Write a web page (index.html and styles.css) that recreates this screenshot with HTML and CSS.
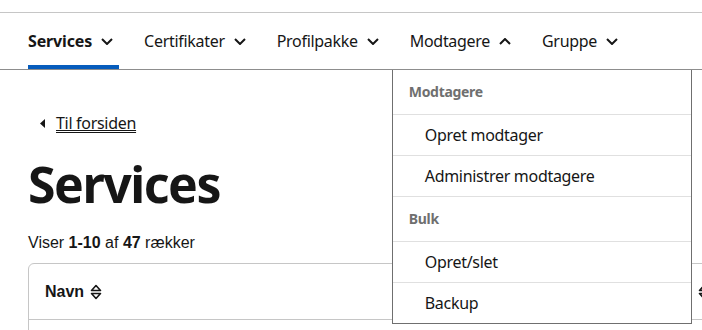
FILE: index.html
```html
<!DOCTYPE html>
<html lang="da">
<head>
    <meta charset="UTF-8">
    <meta name="viewport" content="width=device-width, initial-scale=1.0">
    <title>Services</title>
    <link rel="stylesheet" href="styles.css">
</head>
<body>
    <header class="topbar">
        <nav class="mainnav">
            <ul class="nav-list">
                <li class="nav-item active">
                    <span class="nav-label">Services</span>
                    <svg class="chev" width="12" height="7" viewBox="0 0 12 7"><path d="M1 1 L6 6 L11 1" fill="none" stroke="#161616" stroke-width="2"/></svg>
                </li>
                <li class="nav-item">
                    <span class="nav-label">Certifikater</span>
                    <svg class="chev" width="12" height="7" viewBox="0 0 12 7"><path d="M1 1 L6 6 L11 1" fill="none" stroke="#161616" stroke-width="2"/></svg>
                </li>
                <li class="nav-item">
                    <span class="nav-label">Profilpakke</span>
                    <svg class="chev" width="12" height="7" viewBox="0 0 12 7"><path d="M1 1 L6 6 L11 1" fill="none" stroke="#161616" stroke-width="2"/></svg>
                </li>
                <li class="nav-item open">
                    <span class="nav-label">Modtagere</span>
                    <svg class="chev" width="12" height="7" viewBox="0 0 12 7"><path d="M1 6 L6 1 L11 6" fill="none" stroke="#161616" stroke-width="2"/></svg>
                    <!-- dropdown menu -->
                    <div class="dropdown">
                        <div class="dd-head">Modtagere</div>
                        <a class="dd-link" href="#">Opret modtager</a>
                        <a class="dd-link" href="#">Administrer modtagere</a>
                        <div class="dd-head">Bulk</div>
                        <a class="dd-link" href="#">Opret/slet</a>
                        <a class="dd-link last" href="#">Backup</a>
                    </div>
                </li>
                <li class="nav-item">
                    <span class="nav-label">Gruppe</span>
                    <svg class="chev" width="12" height="7" viewBox="0 0 12 7"><path d="M1 1 L6 6 L11 1" fill="none" stroke="#161616" stroke-width="2"/></svg>
                </li>
            </ul>
        </nav>
    </header>

    <main class="content">
        <a class="back-link" href="#">
            <svg width="5" height="9" viewBox="0 0 5 9"><path d="M5 0 L0 4.5 L5 9 Z" fill="#161616"/></svg>
            <span>Til forsiden</span>
        </a>

        <h1 class="page-title">Services</h1>

        <p class="summary">Viser <b>1-10</b> af <b>47</b> rækker</p>

        <div class="table-wrap">
            <table class="data-table">
                <thead>
                    <tr>
                        <th class="col-name">Navn <svg class="sort" width="12" height="16" viewBox="0 0 12 16"><path d="M6 1.5 L10.5 6.5 H1.5 Z M1.5 9.5 H10.5 L6 14.5 Z" fill="none" stroke="#161616" stroke-width="1.6" stroke-linejoin="round"/></svg></th>
                        <th class="col-type">Type <svg class="sort" width="12" height="16" viewBox="0 0 12 16"><path d="M6 1.5 L10.5 6.5 H1.5 Z M1.5 9.5 H10.5 L6 14.5 Z" fill="none" stroke="#161616" stroke-width="1.6" stroke-linejoin="round"/></svg></th>
                    </tr>
                </thead>
                <tbody>
                    <tr><td>&nbsp;</td><td>&nbsp;</td></tr>
                </tbody>
            </table>
        </div>
    </main>
</body>
</html>
```

FILE: styles.css
```css
html {
    overflow: hidden;
}

body {
    margin: 0;
    padding: 0;
    font-family: "Noto Sans", "Open Sans", Arial, sans-serif;
    color: #161616;
    background-color: #fff;
}

.topbar {
    margin-top: 12px;
    border-top: 1px solid #c6c6c6;
    border-bottom: 1px solid #8d8d8d;
}

.nav-list {
    list-style: none;
    margin: 0;
    padding: 0 0 0 28px;
    display: flex;
    height: 56px;
}

.nav-item {
    position: relative;
    display: flex;
    align-items: center;
    gap: 9px;
    padding-right: 6px;
    margin-right: 25px;
    font-size: 16px;
    letter-spacing: -0.3px;
    cursor: pointer;
}

.nav-item.active .nav-label {
    font-weight: bold;
    letter-spacing: -0.15px;
}

.nav-item.active::after {
    content: "";
    position: absolute;
    left: 0;
    right: 0;
    bottom: 0;
    height: 4px;
    background-color: #065cbc;
}

.chev {
    display: block;
    margin-top: 1px;
}

.dropdown {
    position: absolute;
    top: 100%;
    left: -18px;
    width: 298px;
    margin-top: 1px;
    background-color: #fff;
    border: 1px solid #6f6f6f;
    border-top: none;
    letter-spacing: -0.3px;
    z-index: 10;
}

.dd-head {
    height: 44px;
    line-height: 44px;
    padding-left: 16px;
    font-size: 14px;
    font-weight: bold;
    color: #6f6f6f;
    border-bottom: 1px solid #e0e0e0;
}

.dd-link {
    display: block;
    height: 40px;
    line-height: 40px;
    padding-left: 32px;
    font-size: 16px;
    color: #161616;
    text-decoration: none;
    border-bottom: 1px solid #e0e0e0;
}

.dd-link.last {
    border-bottom: none;
}

.content {
    padding: 0 28px;
}

.back-link {
    display: inline-flex;
    align-items: center;
    gap: 11px;
    margin: 42px 0 0 12px;
    font-size: 16px;
    letter-spacing: -0.3px;
    color: #161616;
}

.back-link span {
    text-decoration: underline;
    text-underline-offset: 3px;
}

.page-title {
    margin: 20px 0 0;
    font-size: 50px;
    line-height: 60px;
    letter-spacing: -1.5px;
    font-weight: bold;
}

.summary {
    margin: 19px 0 0;
    font-family: "Liberation Sans", Arial, sans-serif;
    font-size: 16px;
    line-height: 20px;
}

.table-wrap {
    margin-top: 10px;
    width: 1000px;
    border: 1px solid #c6c6c6;
    border-radius: 6px;
}

.data-table {
    width: 100%;
    table-layout: fixed;
    border-collapse: collapse;
    font-family: "Liberation Sans", Arial, sans-serif;
}

.data-table th {
    height: 55px;
    padding: 0 16px;
    text-align: left;
    font-size: 16px;
    border-bottom: 1px solid #c6c6c6;
    white-space: nowrap;
}

.data-table th.col-name {
    width: 575px;
}

.sort {
    vertical-align: -3px;
    margin-left: 1px;
}

.col-type .sort {
    margin-left: 5px;
}

.data-table td {
    height: 40px;
    padding: 0 16px;
}
```
